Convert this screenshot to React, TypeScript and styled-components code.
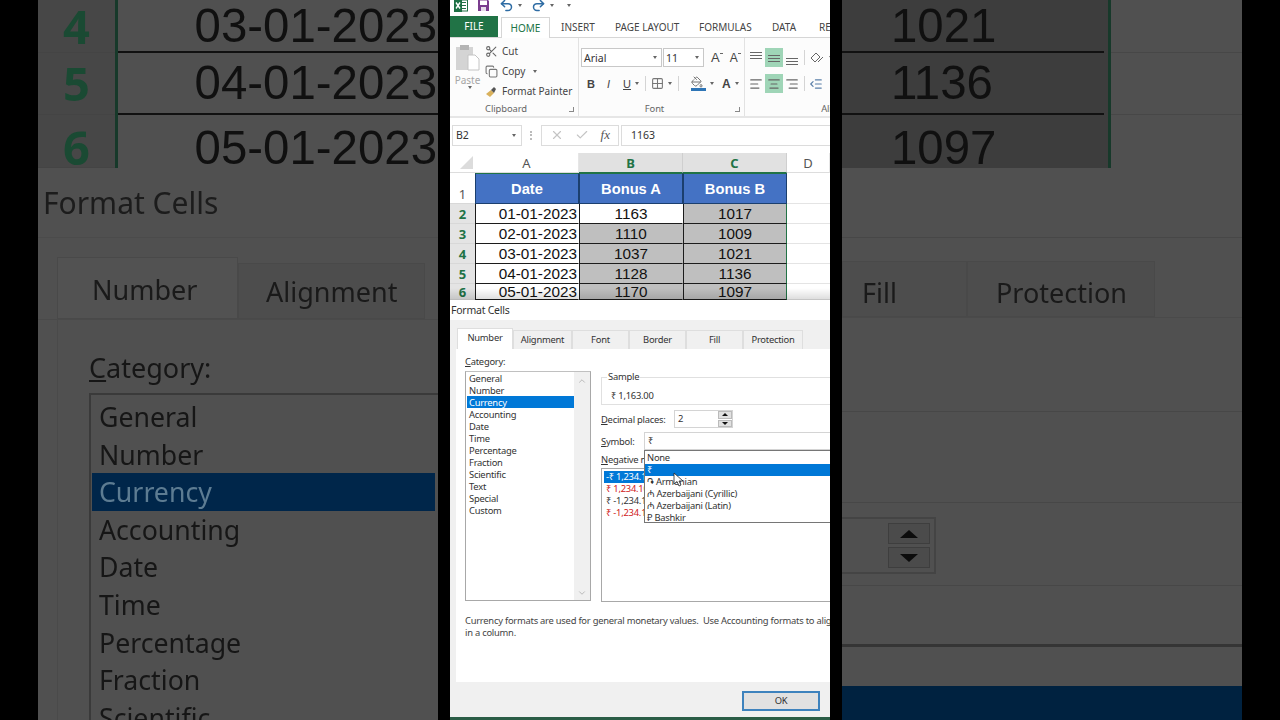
import React from 'react';
import styled, { createGlobalStyle } from 'styled-components';
import {
	AlignCenter,
	AlignLeft,
	AlignRight,
	Check,
	ChevronDown,
	ChevronUp,
	Copy,
	Grid2x2,
	IndentDecrease,
	PaintBucket,
	Redo2,
	Scissors,
	Undo2,
	X,
} from 'lucide-react';

const UI_FONT = `'Noto Sans', 'Open Sans', sans-serif`;
const CELL_FONT = `'Liberation Sans', Arial, sans-serif`;

const GlobalStyle = createGlobalStyle`
	html, body {
		margin: 0;
		height: 100%;
		background: #000;
		overflow: hidden;
	}
	* {
		box-sizing: border-box;
	}
`;

const Page = styled.div`
	display: grid;
	grid-template-columns: 400px 380px 400px;
	column-gap: 12px;
	justify-content: center;
	width: 1280px;
	height: 720px;
	background: #000;
`;

/* ---------- dimmed, zoomed copies either side ---------- */

const SidePanel = styled.div`
	display: flex;
	flex-direction: column;
	height: 720px;
	overflow: hidden;
	background: #505050;
	color: #161616;
	font-family: ${UI_FONT};
	filter: blur(0.5px);
`;

const SideRow = styled.div<{ $height: number; $shift?: number }>`
	display: flex;
	flex: none;
	height: ${(p) => p.$height}px;
`;

const SideRowHead = styled.div<{ $shift: number }>`
	display: flex;
	align-items: center;
	justify-content: center;
	width: 77px;
	padding: ${(p) => p.$shift}px 0 0 0;
	background: #474747;
	border-bottom: 1px solid #444;
	color: #1a4a33;
	font-size: 47px;
	font-weight: 700;
	line-height: 1;
`;

const GreenBar = styled.div`
	flex: none;
	width: 3px;
	background: #17392a;
`;

const SideDate = styled.div<{ $line?: boolean; $shift: number }>`
	flex: 1;
	display: flex;
	align-items: center;
	justify-content: flex-end;
	padding: ${(p) => p.$shift}px 1px 0 0;
	border-bottom: ${(p) => (p.$line ? '2px solid #111' : 'none')};
	font-family: ${CELL_FONT};
	font-size: 47.4px;
	line-height: 1;
	white-space: nowrap;
	color: #101010;
`;

const SideValue = styled.div<{ $line?: boolean; $shift: number }>`
	display: flex;
	align-items: center;
	width: 262px;
	padding: ${(p) => p.$shift}px 0 0 49px;
	background: #3d3d3d;
	border-bottom: ${(p) => (p.$line ? '2px solid #111' : 'none')};
	font-family: ${CELL_FONT};
	font-size: 47.4px;
	line-height: 1;
	color: #101010;
`;

const SideValueGap = styled.div`
	width: 4px;
	background: #3d3d3d;
`;

const SideBlank = styled.div<{ $line?: boolean }>`
	flex: 1;
	border-bottom: ${(p) => (p.$line ? '1px solid #474747' : 'none')};
`;

const SideTitle = styled.div`
	flex: none;
	height: 70px;
	padding: 15px 0 0 5px;
	border-bottom: 1px solid #4b4b4b;
	font-size: 30px;
	line-height: 40px;
	color: #1c1c1c;
`;

const SideTabs = styled.div<{ $height: number }>`
	display: flex;
	flex: none;
	align-items: flex-end;
	height: ${(p) => p.$height}px;
	border-bottom: 1px solid #4a4a4a;
`;

const SideTab = styled.div<{ $width: number; $active?: boolean; $inset: number; $line: number }>`
	flex: none;
	width: ${(p) => p.$width}px;
	height: ${(p) => (p.$active ? 62 : 56)}px;
	padding-left: ${(p) => p.$inset}px;
	background: ${(p) => (p.$active ? '#525252' : '#4d4d4d')};
	border: 1px solid #494949;
	font-size: 27px;
	line-height: ${(p) => p.$line}px;
	color: #1a1a1a;
`;

const SideTabSpacer = styled.div<{ $width: number }>`
	flex: none;
	width: ${(p) => p.$width}px;
`;

const SideBody = styled.div`
	margin-left: 19px;
	padding: 26px 0 0 31px;
	flex: 1;
	border-left: 1px solid #4a4a4a;
`;

const SideLabel = styled.div`
	font-size: 27px;
	line-height: 44px;
	text-decoration-thickness: 2px;
`;

const SideList = styled.div`
	margin-top: 3px;
	padding: 3px 0 0 1px;
	border: 2px solid #3a3a3a;
	border-right: none;
	height: 400px;
`;

const SideListItem = styled.div<{ $selected?: boolean }>`
	height: 37.6px;
	padding-left: 7px;
	margin-right: 3px;
	background: ${(p) => (p.$selected ? '#00264a' : 'transparent')};
	color: ${(p) => (p.$selected ? '#5d7c92' : '#161616')};
	font-size: 26.7px;
	line-height: 38px;
`;

const SideLine = styled.div<{ $top: number; $dark?: boolean }>`
	flex: none;
	margin-top: ${(p) => p.$top}px;
	height: ${(p) => (p.$dark ? 3 : 1)}px;
	background: ${(p) => (p.$dark ? '#353535' : '#474747')};
`;

const SideSpinnerBox = styled.div`
	display: flex;
	flex: none;
	justify-content: flex-end;
	width: 94px;
	height: 57px;
	margin-top: 14px;
	padding: 4px 4px 4px 0;
	border: 2px solid #444;
	border-left: none;
`;

const SideSpinnerStack = styled.div`
	display: flex;
	flex-direction: column;
	gap: 3px;
	width: 42px;
`;

const SideSpinnerButton = styled.div`
	flex: 1;
	display: flex;
	align-items: center;
	justify-content: center;
	border: 1px solid #3e3e3e;
	background: #4b4b4b;
`;

const SideTri = styled.span<{ $down?: boolean }>`
	width: 0;
	height: 0;
	border-left: 9px solid transparent;
	border-right: 9px solid transparent;
	border-top: ${(p) => (p.$down ? '8px solid #0c0c0c' : 'none')};
	border-bottom: ${(p) => (p.$down ? 'none' : '8px solid #0c0c0c')};
`;

const SideBlueBand = styled.div`
	flex: none;
	height: 35px;
	margin-top: 39px;
	background: #002240;
`;

/* ---------- real window in the middle ---------- */

const Center = styled.div`
	position: relative;
	display: flex;
	flex-direction: column;
	height: 720px;
	overflow: hidden;
	background: #fff;
	color: #444;
	font-family: ${UI_FONT};
`;

const QuickBar = styled.div`
	display: flex;
	flex: none;
	align-items: center;
	gap: 9px;
	height: 17px;
	padding: 0 0 6px 4px;
`;

const Caret = styled.span`
	display: inline-block;
	width: 0;
	height: 0;
	margin-left: 4px;
	border-left: 2.5px solid transparent;
	border-right: 2.5px solid transparent;
	border-top: 3px solid #666;
	vertical-align: middle;
`;

const QuickGroup = styled.span`
	display: flex;
	align-items: center;
`;

const TabBar = styled.div`
	display: flex;
	flex: none;
	align-items: flex-end;
	height: 21px;
	border-bottom: 1px solid #d6d6d6;
	font-size: 10px;
	white-space: nowrap;
`;

const FileTab = styled.div`
	flex: none;
	width: 48px;
	height: 21px;
	margin-right: 3px;
	background: #217346;
	color: #fff;
	text-align: center;
	line-height: 21px;
`;

const RibbonTab = styled.div<{ $active?: boolean; $width: number }>`
	flex: none;
	width: ${(p) => p.$width}px;
	height: ${(p) => (p.$active ? 21 : 20)}px;
	margin-bottom: ${(p) => (p.$active ? -1 : 0)}px;
	background: #fff;
	border: ${(p) => (p.$active ? '1px solid #d6d6d6' : 'none')};
	border-bottom: none;
	color: ${(p) => (p.$active ? '#217346' : '#444')};
	text-align: ${(p) => (p.$active ? 'center' : 'left')};
	padding-left: ${(p) => (p.$active ? 0 : 11)}px;
	line-height: 21px;
`;

const Ribbon = styled.div`
	display: flex;
	flex: none;
	height: 80px;
	border-bottom: 2px solid #e6e6e6;
	background: #fcfcfc;
`;

const RibbonGroup = styled.div<{ $width: number }>`
	position: relative;
	display: flex;
	flex: none;
	flex-direction: column;
	width: ${(p) => p.$width}px;
	border-right: 1px solid #e2e2e2;
`;

const GroupBody = styled.div`
	display: flex;
	flex: 1;
	min-height: 0;
`;

const GroupLabel = styled.div<{ $trim: number }>`
	flex: none;
	height: 15px;
	padding-right: ${(p) => p.$trim}px;
	font-size: 9.4px;
	letter-spacing: -0.1px;
	line-height: 15px;
	text-align: center;
	color: #666;
`;

const GroupCorner = styled.span`
	position: absolute;
	right: 4px;
	bottom: 4px;
	width: 5px;
	height: 5px;
	border-right: 1px solid #888;
	border-bottom: 1px solid #888;
`;

const PasteColumn = styled.div`
	display: flex;
	flex-direction: column;
	align-items: center;
	width: 35px;
	padding-top: 6px;
	color: #a6a6a6;
	font-size: 10px;
	line-height: 12px;
`;

const ClipColumn = styled.div`
	display: flex;
	flex-direction: column;
	gap: 1px;
	padding-top: 3px;
`;

const ClipAction = styled.div`
	display: flex;
	align-items: center;
	gap: 4px;
	height: 19px;
	padding-top: 1px;
	font-size: 10px;
	white-space: nowrap;
`;

const FontColumn = styled.div`
	display: flex;
	flex-direction: column;
	gap: 7px;
	padding: 10px 0 0 2px;
`;

const ToolRow = styled.div`
	display: flex;
	align-items: center;
	height: 19px;
`;

const Combo = styled.div<{ $width: number }>`
	display: flex;
	flex: none;
	align-items: center;
	justify-content: space-between;
	width: ${(p) => p.$width}px;
	height: 19px;
	margin-right: 1px;
	padding: 0 4px 0 2px;
	background: #fff;
	border: 1px solid #c8c8c8;
	font-size: 10.5px;
	color: #333;
`;

const FontLetter = styled.span<{ $left: number; $bold?: boolean; $italic?: boolean; $under?: boolean; $size?: number }>`
	flex: none;
	margin-left: ${(p) => p.$left}px;
	font-family: ${CELL_FONT};
	font-size: ${(p) => p.$size ?? 11}px;
	font-weight: ${(p) => (p.$bold ? 700 : 400)};
	font-style: ${(p) => (p.$italic ? 'italic' : 'normal')};
	text-decoration: ${(p) => (p.$under ? 'underline' : 'none')};
	color: #444;
`;

const SizeTick = styled.span`
	flex: none;
	width: 3px;
	height: 2px;
	margin: 0 0 8px 0;
	border-top: 1px solid #666;
`;

const ToolDivider = styled.span<{ $left: number }>`
	flex: none;
	width: 1px;
	height: 15px;
	margin-left: ${(p) => p.$left}px;
	background: #d4d4d4;
`;

const IconSlot = styled.span<{ $left: number }>`
	display: flex;
	flex: none;
	margin-left: ${(p) => p.$left}px;
`;

const FillStack = styled.span`
	display: flex;
	flex: none;
	flex-direction: column;
	margin-left: 12px;
`;

const FillStripe = styled.span`
	width: 15px;
	height: 3px;
	background: #2e75b6;
`;

const AlignColumn = styled.div`
	display: flex;
	flex-direction: column;
	gap: 7px;
	padding: 10px 0 0 2px;
`;

const AlignButton = styled.span<{ $on?: boolean }>`
	display: flex;
	flex: none;
	align-items: center;
	justify-content: center;
	width: 18px;
	height: 19px;
	background: ${(p) => (p.$on ? '#9fd5b7' : 'transparent')};
	color: #666;
`;

const FormulaBar = styled.div`
	display: flex;
	flex: none;
	align-items: center;
	height: 35px;
	padding: 6px 0 7px 2px;
`;

const NameBox = styled.div`
	display: flex;
	align-items: center;
	justify-content: space-between;
	width: 70px;
	height: 21px;
	padding: 0 5px 0 3px;
	border: 1px solid #dcdcdc;
	font-size: 10.5px;
	color: #333;
`;

const Grip = styled.span`
	margin: 0 9px 0 8px;
	width: 2px;
	height: 9px;
	border-left: 2px dotted #bbb;
`;

const FormulaButtons = styled.div`
	display: flex;
	align-items: center;
	justify-content: space-between;
	width: 78px;
	height: 21px;
	padding: 0 8px;
	border: 1px solid #dcdcdc;
	color: #c4c4c4;
`;

const FxLabel = styled.span`
	font-family: 'Liberation Serif', serif;
	font-size: 13px;
	font-style: italic;
	color: #555;
`;

const FormulaInput = styled.div`
	flex: 1;
	height: 21px;
	margin-left: 2px;
	padding-left: 9px;
	border: 1px solid #dcdcdc;
	border-right: none;
	font-size: 10.5px;
	line-height: 19px;
	color: #333;
`;

const Sheet = styled.div`
	position: relative;
	display: grid;
	flex: none;
	grid-template-columns: 25px 104px 104px 104px 43px;
	grid-template-rows: 20px 31px 20px 20px 20px 20px 16px;
	height: 147px;
	overflow: hidden;
	&::after {
		content: '';
		position: absolute;
		left: 0;
		right: 0;
		bottom: 0;
		height: 12px;
		background: linear-gradient(rgba(0, 0, 0, 0), rgba(0, 0, 0, 0.14));
	}
`;

const Corner = styled.div`
	position: relative;
	border-bottom: 1px solid #ddd;
	&::after {
		content: '';
		position: absolute;
		right: 2px;
		bottom: 3px;
		border-left: 13px solid transparent;
		border-bottom: 13px solid #dcdcdc;
	}
`;

const ColHead = styled.div<{ $selected?: boolean }>`
	display: flex;
	align-items: center;
	justify-content: center;
	padding-top: 1px;
	background: ${(p) => (p.$selected ? '#e1e1e1' : '#fff')};
	border-right: 1px solid ${(p) => (p.$selected ? '#cfcfcf' : '#e6e6e6')};
	border-bottom: 1px solid ${(p) => (p.$selected ? '#217346' : '#ddd')};
	color: ${(p) => (p.$selected ? '#217346' : '#555')};
	font-size: 13px;
	font-weight: ${(p) => (p.$selected ? 700 : 400)};
`;

const RowHead = styled.div<{ $selected?: boolean; $tall?: boolean }>`
	display: flex;
	align-items: ${(p) => (p.$tall ? 'flex-end' : 'center')};
	justify-content: center;
	background: ${(p) => (p.$selected ? '#e4e4e4' : '#fff')};
	border-bottom: 1px solid #d8d8d8;
	color: ${(p) => (p.$selected ? '#217346' : '#555')};
	font-size: 13px;
	font-weight: ${(p) => (p.$selected ? 700 : 400)};
`;

const HeaderCell = styled.div`
	display: flex;
	align-items: center;
	justify-content: center;
	background: #4472c4;
	border: 1px solid #1b3f6e;
	border-top: 1px solid #217346;
	color: #fff;
	font-family: ${CELL_FONT};
	font-size: 14.7px;
	font-weight: 700;
`;

const DataCell = styled.div<{ $grey?: boolean; $right?: boolean; $edge?: boolean }>`
	display: flex;
	align-items: center;
	justify-content: ${(p) => (p.$right ? 'flex-end' : 'center')};
	padding-right: ${(p) => (p.$right ? 1 : 0)}px;
	background: ${(p) => (p.$grey ? '#bfbfbf' : '#fff')};
	border-left: 1px solid #1c1c1c;
	border-right: 1px solid ${(p) => (p.$edge ? '#217346' : 'transparent')};
	border-bottom: 1px solid #1c1c1c;
	color: #111;
	font-family: ${CELL_FONT};
	font-size: 15.3px;
	white-space: nowrap;
`;

const BlankCell = styled.div`
	border-bottom: 1px solid #e4e4e4;
`;

const Dialog = styled.div`
	display: flex;
	flex: 1;
	flex-direction: column;
	min-height: 0;
	background: #f0f0f0;
	font-size: 9.4px;
	letter-spacing: -0.24px;
	color: #333;
`;

const DialogTitle = styled.div`
	flex: none;
	height: 20px;
	padding-left: 1px;
	background: #fff;
	font-size: 10.5px;
	line-height: 21px;
`;

const DialogTabs = styled.div`
	display: flex;
	flex: none;
	align-items: flex-end;
	height: 29px;
	padding-left: 7px;
`;

const DialogTab = styled.div<{ $width: number; $active?: boolean }>`
	flex: none;
	width: ${(p) => p.$width}px;
	height: ${(p) => (p.$active ? 21 : 19)}px;
	background: ${(p) => (p.$active ? '#fff' : '#f0f0f0')};
	border: 1px solid #dedede;
	border-bottom: none;
	text-align: center;
	line-height: 18px;
`;

const DialogBody = styled.div`
	flex: none;
	height: 333px;
	margin-left: 6px;
	padding: 7px 0 0 9px;
	background: #fff;
	white-space: nowrap;
`;

const Label = styled.div<{ $top?: number }>`
	height: 12px;
	margin-top: ${(p) => p.$top ?? 0}px;
	line-height: 12px;
`;

const Columns = styled.div`
	display: flex;
	gap: 10px;
	margin-top: 3px;
`;

const CategoryList = styled.div`
	display: flex;
	flex: none;
	width: 126px;
	height: 230px;
	border: 1px solid #a8a8a8;
	border-top: 1px solid #c0c0c0;
`;

const CategoryItems = styled.div`
	flex: 1;
	padding-left: 1px;
`;

const CategoryItem = styled.div<{ $selected?: boolean }>`
	height: 12px;
	padding-left: 2px;
	background: ${(p) => (p.$selected ? '#0078d7' : 'transparent')};
	color: ${(p) => (p.$selected ? '#fff' : '#333')};
	line-height: 13px;
`;

const ListScroll = styled.div`
	display: flex;
	flex: none;
	flex-direction: column;
	align-items: center;
	justify-content: space-between;
	width: 16px;
	padding: 4px 0 2px;
	background: #f0f0f0;
	color: #b0b0b0;
`;

const FormatColumn = styled.div`
	position: relative;
	flex: none;
	width: 240px;
`;

const SampleBox = styled.fieldset`
	height: 34px;
	margin: 0;
	padding: 0 0 0 9px;
	border: 1px solid #e0e0e0;
	border-right: none;
	legend {
		margin-left: -4px;
		padding: 0 1px;
		height: 12px;
		line-height: 12px;
		font-size: 9.4px;
	}
`;

const SampleValue = styled.div`
	margin-top: 7px;
	line-height: 12px;
`;

const FieldRow = styled.div<{ $top: number }>`
	display: flex;
	align-items: center;
	margin-top: ${(p) => p.$top}px;
	height: 18px;
`;

const FieldLabel = styled.span<{ $width: number }>`
	flex: none;
	width: ${(p) => p.$width}px;
`;

const SpinInput = styled.div`
	display: flex;
	flex: none;
	justify-content: space-between;
	width: 59px;
	height: 18px;
	padding-left: 3px;
	border: 1px solid #d4d4d4;
	line-height: 16px;
`;

const SpinButtons = styled.div`
	display: flex;
	flex-direction: column;
	gap: 1px;
	width: 14px;
	background: #fff;
`;

const SpinButton = styled.span`
	display: flex;
	flex: 1;
	align-items: center;
	justify-content: center;
	background: #e1e1e1;
	border: 1px solid #bbb;
`;

const Tri = styled.span<{ $down?: boolean }>`
	width: 0;
	height: 0;
	border-left: 3px solid transparent;
	border-right: 3px solid transparent;
	border-top: ${(p) => (p.$down ? '3px solid #111' : 'none')};
	border-bottom: ${(p) => (p.$down ? 'none' : '3px solid #111')};
`;

const SymbolSelect = styled.div`
	flex: 1;
	height: 18px;
	padding-left: 3px;
	border: 1px solid #d4d4d4;
	border-right: none;
	line-height: 16px;
`;

const NegativeList = styled.div`
	height: 134px;
	margin-top: 2px;
	padding: 2px 0 0 2px;
	border: 1px solid #a8a8a8;
	border-right: none;
`;

const NegativeItem = styled.div<{ $red?: boolean; $selected?: boolean }>`
	height: 12px;
	padding-left: 2px;
	background: ${(p) => (p.$selected ? '#0078d7' : 'transparent')};
	color: ${(p) => (p.$selected ? '#fff' : p.$red ? '#d02020' : '#333')};
	line-height: 12px;
`;

const SymbolMenu = styled.div`
	position: absolute;
	left: 43px;
	top: 79px;
	width: 200px;
	height: 73px;
	padding-top: 1px;
	background: #fff;
	border: 1px solid #767676;
`;

const SymbolOption = styled.div<{ $selected?: boolean }>`
	height: 12px;
	padding-left: 2px;
	background: ${(p) => (p.$selected ? '#0078d7' : 'transparent')};
	color: ${(p) => (p.$selected ? '#fff' : '#333')};
	line-height: 12px;
`;

const Pointer = styled.svg`
	position: absolute;
	left: 72px;
	top: 101px;
`;

const Description = styled.div`
	margin-top: 13px;
	line-height: 12px;
	color: #444;
`;

const DialogFooter = styled.div`
	display: flex;
	flex: none;
	justify-content: flex-end;
	height: 35px;
	padding: 9px 10px 0 0;
`;

const OkButton = styled.div`
	width: 78px;
	height: 20px;
	background: #e1e1e1;
	border: 2px solid #3d82bd;
	text-align: center;
	line-height: 16px;
`;

const StatusStrip = styled.div`
	flex: none;
	height: 3px;
	background: #2b5d46;
`;

const ExcelLogo = () => (
	<svg width="14" height="13" viewBox="0 0 14 13">
		<rect x="5" y="1" width="8.5" height="11" fill="#fff" stroke="#217346" />
		<path d="M7 3.5h5M7 6.5h5M7 9.5h5" stroke="#217346" />
		<rect x="0" y="0" width="8" height="13" fill="#1e7145" />
		<path d="M2 3.5l4 6M6 3.5l-4 6" stroke="#fff" strokeWidth="1.4" />
	</svg>
);

const SaveIcon = () => (
	<svg width="13" height="13" viewBox="0 0 13 13">
		<path d="M1 1h10l1 1v10H1z" fill="#7a3c8e" />
		<rect x="3" y="1.5" width="7" height="4.5" fill="#fff" />
		<rect x="4" y="8" width="5" height="4" fill="#e6dcea" />
	</svg>
);

const PasteIcon = () => (
	<svg width="26" height="30" viewBox="0 0 26 30">
		<rect x="1" y="3" width="17" height="23" fill="#d4d4d4" />
		<rect x="5" y="1" width="9" height="5" fill="#b4b4b4" />
		<path d="M13 11h7l4 4v11H13z" fill="#fff" stroke="#c4c4c4" />
	</svg>
);

const PainterIcon = () => (
	<svg width="13" height="13" viewBox="0 0 13 13">
		<path d="M1 9l5-4 3 3-4 4z" fill="#d9b15c" />
		<path d="M6 5l3-3 2 2-2 4z" fill="#555" />
	</svg>
);

const OrientIcon = () => (
	<svg width="16" height="14" viewBox="0 0 16 14" fill="none" stroke="#666">
		<path d="M2 7l5-5 4 4-5 5zM9 11l5-5" />
	</svg>
);

// three lines sitting high, middle or low in the slot
const VerticalAlignIcon = ({ offset }: { offset: number }) => (
	<svg width="14" height="14" viewBox="0 0 14 14" fill="none" stroke="#666">
		<path d={`M1 ${offset + 0.5}h12M1 ${offset + 3.5}h12M1 ${offset + 6.5}h12`} />
	</svg>
);

const dates = ['01-01-2023', '02-01-2023', '03-01-2023', '04-01-2023', '05-01-2023'];
const bonusA = ['1163', '1110', '1037', '1128', '1170'];
const bonusB = ['1017', '1009', '1021', '1136', '1097'];
const categories = [
	'General',
	'Number',
	'Currency',
	'Accounting',
	'Date',
	'Time',
	'Percentage',
	'Fraction',
	'Scientific',
	'Text',
	'Special',
	'Custom',
];
const sideRows = [
	{ num: '4', date: '03-01-2023', value: '1021', height: 53, shift: 0 },
	{ num: '5', date: '04-01-2023', value: '1136', height: 62, shift: 0 },
	{ num: '6', date: '05-01-2023', value: '1097', height: 53, shift: 12 },
];
const dialogTabs = [
	{ name: 'Number', width: 56 },
	{ name: 'Alignment', width: 59 },
	{ name: 'Font', width: 57 },
	{ name: 'Border', width: 57 },
	{ name: 'Fill', width: 57 },
	{ name: 'Protection', width: 60 },
];
const ribbonTabs = [
	{ name: 'INSERT', width: 54 },
	{ name: 'PAGE LAYOUT', width: 84 },
	{ name: 'FORMULAS', width: 73 },
	{ name: 'DATA', width: 47 },
	{ name: 'REVIEW', width: 60 },
];

const App: React.FC = () => {
	return (
		<Page>
			<GlobalStyle />

			<SidePanel>
				{sideRows.map((row, i) => (
					<SideRow key={row.num} $height={row.height}>
						<SideRowHead $shift={row.shift}>{row.num}</SideRowHead>
						<GreenBar />
						<SideDate $line={i < 2} $shift={row.shift}>
							{row.date}
						</SideDate>
					</SideRow>
				))}
				<SideTitle>Format Cells</SideTitle>
				<SideTabs $height={82}>
					<SideTabSpacer $width={19} />
					<SideTab $width={181} $inset={34} $line={64} $active>
						Number
					</SideTab>
					<SideTab $width={187} $inset={27} $line={56}>
						Alignment
					</SideTab>
				</SideTabs>
				<SideBody>
					<SideLabel>
						<u>C</u>ategory:
					</SideLabel>
					<SideList>
						{categories.slice(0, 9).map((name) => (
							<SideListItem key={name} $selected={name === 'Currency'}>
								{name}
							</SideListItem>
						))}
					</SideList>
				</SideBody>
			</SidePanel>

			<Center>
				<QuickBar>
					<ExcelLogo />
					<SaveIcon />
					<QuickGroup>
						<Undo2 size={15} color="#2e6ca4" strokeWidth={2.4} />
						<Caret />
					</QuickGroup>
					<QuickGroup>
						<Redo2 size={15} color="#2e6ca4" strokeWidth={2.4} />
						<Caret />
					</QuickGroup>
					<Caret />
				</QuickBar>

				<TabBar>
					<FileTab>FILE</FileTab>
					<RibbonTab $active $width={49}>
						HOME
					</RibbonTab>
					{ribbonTabs.map((tab) => (
						<RibbonTab key={tab.name} $width={tab.width}>
							{tab.name}
						</RibbonTab>
					))}
				</TabBar>

				<Ribbon>
					<RibbonGroup $width={129}>
						<GroupBody>
							<PasteColumn>
								<PasteIcon />
								Paste
								<Caret />
							</PasteColumn>
							<ClipColumn>
								<ClipAction>
									<Scissors size={13} color="#666" />
									Cut
								</ClipAction>
								<ClipAction>
									<Copy size={13} color="#777" />
									Copy
									<Caret />
								</ClipAction>
								<ClipAction>
									<PainterIcon />
									Format Painter
								</ClipAction>
							</ClipColumn>
						</GroupBody>
						<GroupLabel $trim={16}>Clipboard</GroupLabel>
						<GroupCorner />
					</RibbonGroup>

					<RibbonGroup $width={166}>
						<GroupBody>
							<FontColumn>
								<ToolRow>
									<Combo $width={81}>
										Arial
										<Caret />
									</Combo>
									<Combo $width={41}>
										11
										<Caret />
									</Combo>
									<FontLetter $left={6} $size={13}>
										A
									</FontLetter>
									<SizeTick />
									<FontLetter $left={7} $size={12}>
										A
									</FontLetter>
									<SizeTick />
								</ToolRow>
								<ToolRow>
									<FontLetter $left={6} $bold>
										B
									</FontLetter>
									<FontLetter $left={12} $italic>
										I
									</FontLetter>
									<FontLetter $left={13} $under>
										U
									</FontLetter>
									<Caret />
									<ToolDivider $left={6} />
									<IconSlot $left={5}>
										<Grid2x2 size={13} color="#777" />
									</IconSlot>
									<Caret />
									<ToolDivider $left={6} />
									<FillStack>
										<PaintBucket size={12} color="#777" />
										<FillStripe />
									</FillStack>
									<Caret />
									<FontLetter $left={8} $bold $size={12}>
										A
									</FontLetter>
									<Caret />
								</ToolRow>
							</FontColumn>
						</GroupBody>
						<GroupLabel $trim={14}>Font</GroupLabel>
						<GroupCorner />
					</RibbonGroup>

					<RibbonGroup $width={198}>
						<GroupBody>
							<AlignColumn>
								<ToolRow>
									<AlignButton>
										<VerticalAlignIcon offset={1} />
									</AlignButton>
									<AlignButton $on>
										<VerticalAlignIcon offset={4} />
									</AlignButton>
									<AlignButton>
										<VerticalAlignIcon offset={7} />
									</AlignButton>
									<ToolDivider $left={3} />
									<IconSlot $left={4}>
										<OrientIcon />
									</IconSlot>
									<Caret />
								</ToolRow>
								<ToolRow>
									<AlignButton>
										<AlignLeft size={14} />
									</AlignButton>
									<AlignButton $on>
										<AlignCenter size={14} />
									</AlignButton>
									<AlignButton>
										<AlignRight size={14} />
									</AlignButton>
									<ToolDivider $left={3} />
									<IconSlot $left={4}>
										<IndentDecrease size={14} color="#5a7fa8" />
									</IconSlot>
								</ToolRow>
							</AlignColumn>
						</GroupBody>
						<GroupLabel $trim={0}>Alignment</GroupLabel>
					</RibbonGroup>
				</Ribbon>

				<FormulaBar>
					<NameBox>
						B2
						<Caret />
					</NameBox>
					<Grip />
					<FormulaButtons>
						<X size={14} />
						<Check size={14} />
						<FxLabel>fx</FxLabel>
					</FormulaButtons>
					<FormulaInput>1163</FormulaInput>
				</FormulaBar>

				<Sheet>
					<Corner />
					<ColHead>A</ColHead>
					<ColHead $selected>B</ColHead>
					<ColHead $selected>C</ColHead>
					<ColHead>D</ColHead>

					<RowHead $tall>1</RowHead>
					<HeaderCell>Date</HeaderCell>
					<HeaderCell>Bonus A</HeaderCell>
					<HeaderCell>Bonus B</HeaderCell>
					<BlankCell />

					{dates.map((date, i) => (
						<React.Fragment key={date}>
							<RowHead $selected>{i + 2}</RowHead>
							<DataCell $right>{date}</DataCell>
							<DataCell $grey={i > 0}>{bonusA[i]}</DataCell>
							<DataCell $grey $edge>
								{bonusB[i]}
							</DataCell>
							<BlankCell />
						</React.Fragment>
					))}
				</Sheet>

				<Dialog>
					<DialogTitle>Format Cells</DialogTitle>
					<DialogTabs>
						{dialogTabs.map((tab, i) => (
							<DialogTab key={tab.name} $width={tab.width} $active={i === 0}>
								{tab.name}
							</DialogTab>
						))}
					</DialogTabs>
					<DialogBody>
						<Label>
							<u>C</u>ategory:
						</Label>
						<Columns>
							<CategoryList>
								<CategoryItems>
									{categories.map((name) => (
										<CategoryItem key={name} $selected={name === 'Currency'}>
											{name}
										</CategoryItem>
									))}
								</CategoryItems>
								<ListScroll>
									<ChevronUp size={10} />
									<ChevronDown size={10} />
								</ListScroll>
							</CategoryList>

							<FormatColumn>
								<SampleBox>
									<legend>Sample</legend>
									<SampleValue>₹ 1,163.00</SampleValue>
								</SampleBox>
								<FieldRow $top={5}>
									<FieldLabel $width={73}>
										<u>D</u>ecimal places:
									</FieldLabel>
									<SpinInput>
										2
										<SpinButtons>
											<SpinButton>
												<Tri />
											</SpinButton>
											<SpinButton>
												<Tri $down />
											</SpinButton>
										</SpinButtons>
									</SpinInput>
								</FieldRow>
								<FieldRow $top={4}>
									<FieldLabel $width={43}>
										<u>S</u>ymbol:
									</FieldLabel>
									<SymbolSelect>₹</SymbolSelect>
								</FieldRow>
								<Label $top={4}>
									<u>N</u>egative numbers:
								</Label>
								<NegativeList>
									<NegativeItem $selected>-₹ 1,234.10</NegativeItem>
									<NegativeItem $red>₹ 1,234.10</NegativeItem>
									<NegativeItem>₹ -1,234.10</NegativeItem>
									<NegativeItem $red>₹ -1,234.10</NegativeItem>
								</NegativeList>
								<SymbolMenu>
									<SymbolOption>None</SymbolOption>
									<SymbolOption $selected>₹</SymbolOption>
									<SymbolOption>֏ Armenian</SymbolOption>
									<SymbolOption>₼ Azerbaijani (Cyrillic)</SymbolOption>
									<SymbolOption>₼ Azerbaijani (Latin)</SymbolOption>
									<SymbolOption>₽ Bashkir</SymbolOption>
								</SymbolMenu>
								<Pointer width="10" height="15" viewBox="0 0 10 15">
									<path d="M1 1v11l3-2.5 2 4.5 2-1-2-4h4z" fill="#fff" stroke="#222" strokeWidth="0.8" />
								</Pointer>
							</FormatColumn>
						</Columns>
						<Description>
							Currency formats are used for general monetary values.&nbsp; Use Accounting formats to align decimal points
							<br />
							in a column.
						</Description>
					</DialogBody>
					<DialogFooter>
						<OkButton>OK</OkButton>
					</DialogFooter>
					<StatusStrip />
				</Dialog>
			</Center>

			<SidePanel>
				{sideRows.map((row, i) => (
					<SideRow key={row.num} $height={row.height}>
						<SideValue $line={i < 2} $shift={row.shift}>
							{row.value}
						</SideValue>
						<SideValueGap />
						<GreenBar />
						<SideBlank $line={i < 2} />
					</SideRow>
				))}
				<SideLine $top={69} />
				<SideTabs $height={80}>
					<SideTab $width={125} $inset={19} $line={62}>
						Fill
					</SideTab>
					<SideTab $width={188} $inset={28} $line={62}>
						Protection
					</SideTab>
				</SideTabs>
				<SideLine $top={93} />
				<SideLine $top={90} />
				<SideSpinnerBox>
					<SideSpinnerStack>
						<SideSpinnerButton>
							<SideTri />
						</SideSpinnerButton>
						<SideSpinnerButton>
							<SideTri $down />
						</SideSpinnerButton>
					</SideSpinnerStack>
				</SideSpinnerBox>
				<SideLine $top={11} />
				<SideLine $top={58} $dark />
				<SideBlueBand />
			</SidePanel>
		</Page>
	);
};

export default App;
